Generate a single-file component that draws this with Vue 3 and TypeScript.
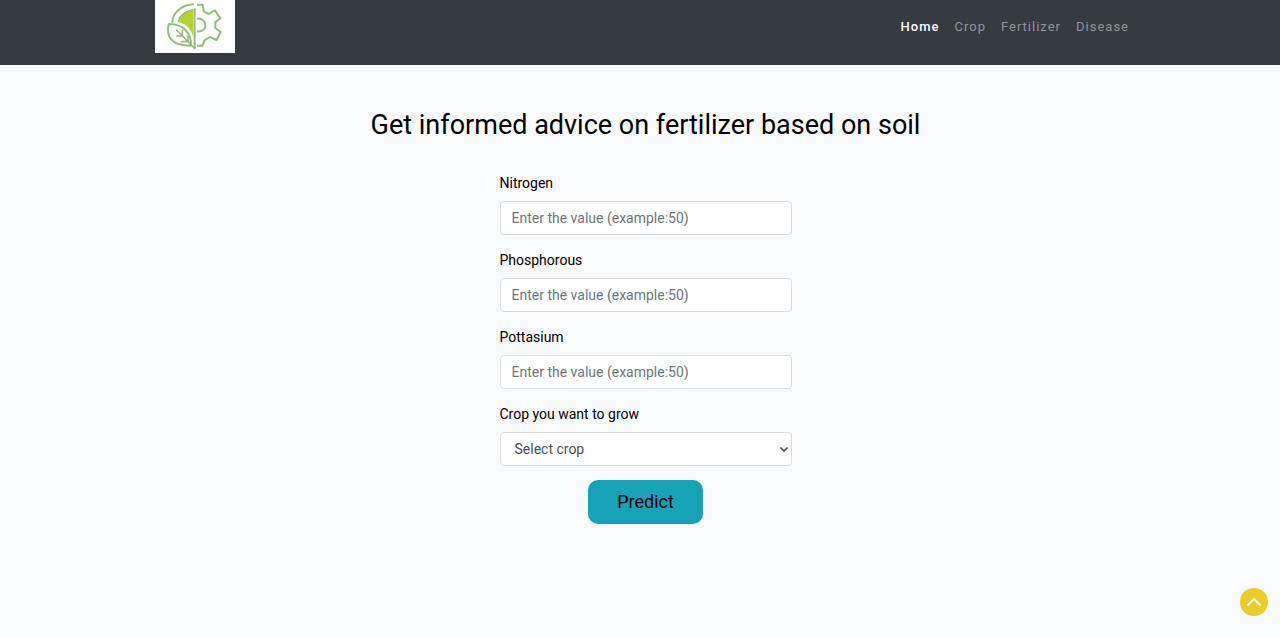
<script setup lang="ts">
import { reactive, ref } from 'vue'

interface NutrientField {
  id: 'nitrogen' | 'phosphorous' | 'pottasium'
  label: string
}

const links: string[] = ['Home', 'Crop', 'Fertilizer', 'Disease']
const fields: NutrientField[] = [
  { id: 'nitrogen', label: 'Nitrogen' },
  { id: 'phosphorous', label: 'Phosphorous' },
  { id: 'pottasium', label: 'Pottasium' },
]
const crops: string[] = ['rice', 'maize', 'chickpea', 'kidneybeans', 'banana', 'mango', 'grapes', 'cotton', 'coffee']

const values = reactive({ nitrogen: '', phosphorous: '', pottasium: '' })
const crop = ref('')

function scrollUp(): void {
  window.scrollTo({ top: 0, behavior: 'smooth' })
}
</script>

<template>
  <div class="page">
    <header class="header">
      <div class="bar">
        <a class="logo" href="#" aria-label="Home page">
          <svg viewBox="0 0 240 159" fill="none" stroke="#93bd80" stroke-width="6" stroke-linejoin="round" stroke-linecap="round">
            <path d="M115 29C91 31 74 45 70 66C94 71 109 88 115 113Z" fill="#b3d334" stroke="none" />
            <path d="M52 66C54 38 78 16 114 13" />
            <path d="M70 64C74 47 87 34 113 29" stroke-width="4" />
            <path d="M119 28V145" />
            <path d="M41 72C34 106 43 137 108 137C109 101 86 71 41 72Z" fill="#fff" />
            <path d="M65 90L119 145M82 91V108H65M99 110V125H80" stroke-width="5" />
            <path d="M126 14H143L146 34L161 42L180 31L196 55L181 67V84L197 96L185 120L165 111L148 121L143 137H126" stroke-linecap="butt" />
            <path d="M126 56C148 53 159 79 144 90C139 94 134 95 126 94" stroke-linecap="butt" />
          </svg>
        </a>
        <nav class="nav" aria-label="Main">
          <a v-for="(link, i) in links" :key="link" href="#" :class="{ active: i === 0 }">{{ link }}</a>
        </nav>
      </div>
    </header>

    <main class="main">
      <h2>Get informed advice on fertilizer based on soil</h2>
      <form class="form" @submit.prevent>
        <div v-for="field in fields" :key="field.id" class="group">
          <label :for="field.id">{{ field.label }}</label>
          <input :id="field.id" v-model="values[field.id]" type="text" inputmode="numeric" placeholder="Enter the value (example:50)" />
        </div>
        <div class="group">
          <label for="crop">Crop you want to grow</label>
          <div class="select">
            <select id="crop" v-model="crop">
              <option value="">Select crop</option>
              <option v-for="name in crops" :key="name" :value="name">{{ name }}</option>
            </select>
            <svg class="chevron" viewBox="0 0 20 20" fill="none" stroke="#3b3e41" stroke-width="3"><path d="M3 7L10 14L17 7" /></svg>
          </div>
        </div>
        <button class="predict" type="submit">Predict</button>
      </form>
    </main>

    <button class="top" type="button" aria-label="Back to top" @click="scrollUp">
      <svg viewBox="0 0 28 28" fill="none" stroke="#fffbe0" stroke-width="2" stroke-linecap="round" stroke-linejoin="round"><path d="M8 17L14 11L20 17" /></svg>
    </button>
  </div>
</template>

<style>
body {
  margin: 0;
  background: #f8f9fb;
}
</style>

<style scoped>
.page {
  min-height: 100vh;
  background: #f8f9fb;
  color: #000;
  font-family: Roboto, "Noto Sans", sans-serif;
  font-size: 14px;
  line-height: 22px;
}

.page * {
  box-sizing: border-box;
}

.header {
  background: #363a41;
}

.bar {
  display: flex;
  justify-content: space-between;
  align-items: flex-start;
  max-width: 978px;
  margin: 0 auto;
  padding: 0 0 12px 4px;
}

.logo {
  display: block;
  width: 80px;
  height: 53px;
  background: #fff;
}

.logo svg {
  display: block;
  width: 100%;
  height: 100%;
}

.nav {
  display: flex;
  gap: 15px;
  padding-top: 16px;
  font-size: 13px;
  letter-spacing: 1px;
}

.nav a {
  color: #929498;
  text-decoration: none;
}

.nav a.active {
  color: #fff;
  font-weight: 500;
}

.main {
  display: flex;
  flex-direction: column;
  align-items: center;
  padding: 43px 0 48px 11px;
}

h2 {
  margin: 0 0 30px;
  font-size: 27px;
  font-weight: 400;
  line-height: 34px;
  text-align: center;
}

.form {
  display: flex;
  flex-direction: column;
  align-items: stretch;
  gap: 14px;
  width: 292px;
}

.group {
  display: flex;
  flex-direction: column;
  gap: 7px;
}

input,
select {
  width: 100%;
  height: 34px;
  padding: 0 11px;
  border: 1px solid #d9dce0;
  border-radius: 4px;
  background: #fff;
  color: #495057;
  font: inherit;
}

input::placeholder {
  color: #6c757d;
  opacity: 1;
}

.select {
  position: relative;
}

select {
  display: block;
  appearance: none;
  padding: 0 14px;
}

.chevron {
  position: absolute;
  top: 12px;
  right: 3px;
  width: 10px;
  height: 10px;
  pointer-events: none;
}

.predict {
  align-self: center;
  width: 115px;
  height: 44px;
  padding: 0;
  border: 0;
  border-radius: 10px;
  background: #18a2b8;
  color: #000;
  font: inherit;
  font-size: 18px;
}

.top {
  position: fixed;
  right: 12px;
  bottom: 22px;
  width: 28px;
  height: 28px;
  padding: 0;
  border: 0;
  border-radius: 50%;
  background: #e8cd2c;
}

.top svg {
  display: block;
}
</style>
